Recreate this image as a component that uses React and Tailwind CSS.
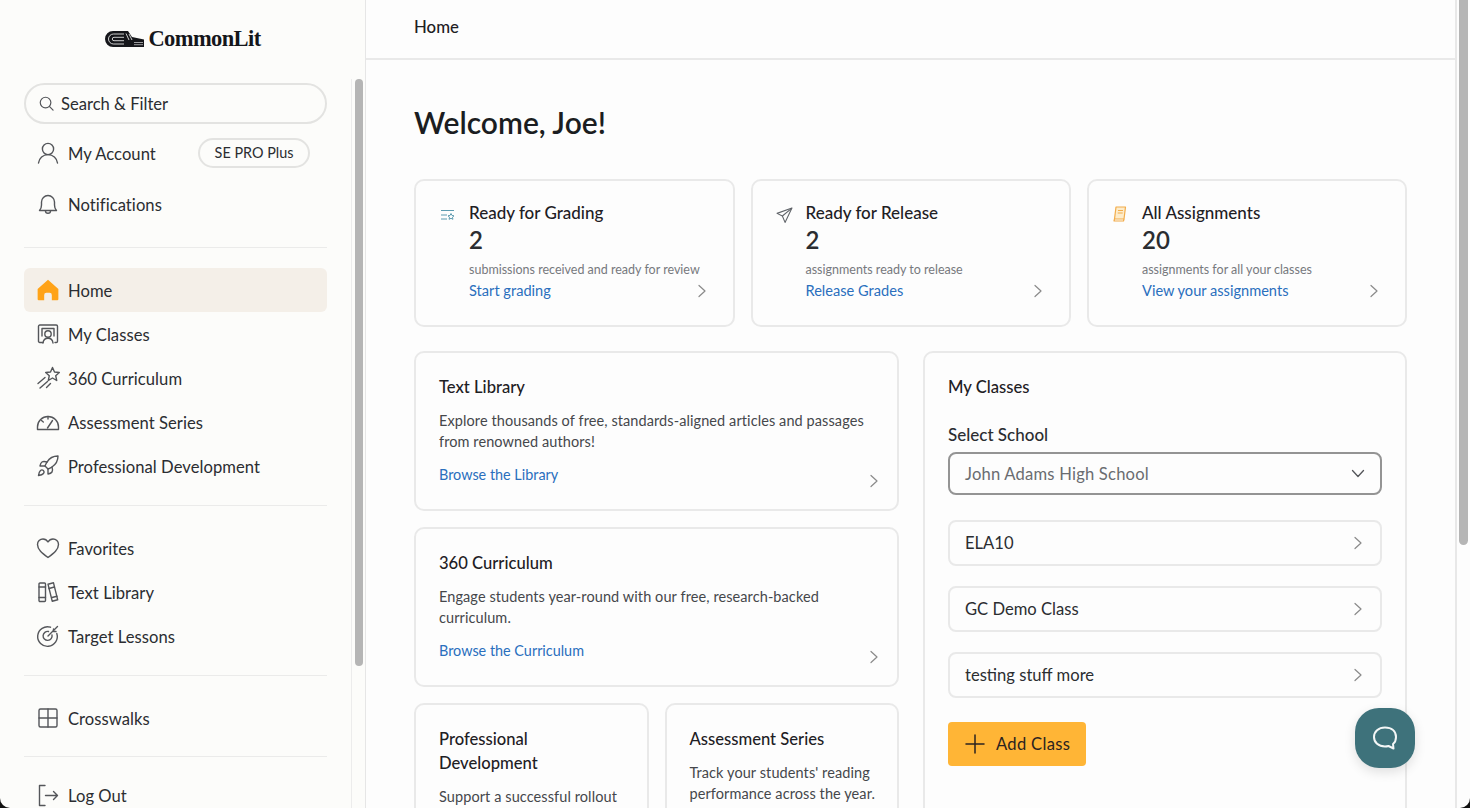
import React from "react";

const Ico = ({ children, size = 24, className = "", sw = 1.6 }) => (
  <svg width={size} height={size} viewBox="0 0 24 24" fill="none" stroke="currentColor" strokeWidth={sw} strokeLinecap="round" strokeLinejoin="round" className={`shrink-0 ${className}`}>
    {children}
  </svg>
);

const Chevron = ({ className = "" }) => (
  <svg width="10" height="14" viewBox="0 0 10 14" fill="none" stroke="#8a8a8a" strokeWidth="1.2" strokeLinecap="round" strokeLinejoin="round" className={`shrink-0 ${className}`}>
    <path d="M2 1.5 8 7l-6 5.5" />
  </svg>
);

const icons = {
  user: <><circle cx="12" cy="8" r="5.6" /><path d="M2.5 22c.6-5 4.5-8.4 9.5-8.4s8.900 3.400 9.500 8.400" /></>,
  bell: <><path d="M3.500 18.500c1.500-1.500 2-3 2-5.500V10a6.500 6.500 0 0 1 13 0v3c0 2.500.5 4 2 5.500z" /><path d="M9.500 19c0 3 5 3 5 0" /></>,
  classes: <><path d="M7 20.500H3.800a1.300 1.300 0 0 1-1.300-1.300V4.300A1.300 1.300 0 0 1 3.800 3h16.400a1.300 1.300 0 0 1 1.300 1.300v14.900a1.300 1.300 0 0 1-1.300 1.300H19" /><path d="M6 14V6.500h12V14" /><circle cx="12" cy="12" r="3.200" /><path d="M7 21c.4-3 2.500-4.800 5-4.800s4.600 1.800 5 4.800" /></>,
  star: <><path d="m16.500 1.500 2 4.500 4.800.5-3.600 3.200 1 4.800-4.200-2.500-4.200 2.500 1-4.800L9.700 6.500l4.800-.5z" /><path d="M9 11.500 2 17.500M11.500 15.500l-7.500 6.500M14.500 17.500 10.500 21.500" /></>,
  gauge: <><path d="M1.500 19.500V17a10.500 10.500 0 0 1 21 0v2.500z" /><path d="m11.500 18 5-7.500M12 6.500v2.500M5.500 10.500l1.800 1.500" /></>,
  rocket: <><path d="M4.500 16.500c-1.500 1.260-2 5-2 5s3.740-.5 5-2c.71-.84.700-2.130-.090-2.910a2.180 2.180 0 0 0-2.910-.090z" /><path d="m12 15-3-3a22 22 0 0 1 2-3.950A12.880 12.880 0 0 1 22 2c0 2.720-.78 7.500-6 11a22.350 22.350 0 0 1-4 2z" /><path d="M9 12H4s.55-3.030 2-4c1.620-1.080 5 0 5 0" /><path d="M12 15v5s3.030-.55 4-2c1.080-1.620 0-5 0-5" /></>,
  heart: <path d="M12 21.500C6 17 1.500 13.500 1.500 8.500A5.500 5.500 0 0 1 7 3c2.200 0 3.800 1 5 3 1.200-2 2.800-3 5-3a5.500 5.500 0 0 1 5.500 5.500c0 5-4.500 8.500-10.500 13z" />,
  books: <><rect x="3" y="3" width="6.500" height="18.500" rx="1" /><path d="M3 7h6.500M3 17.500h6.500" /><path d="m12 4.200 5.500-1.400 4.200 17-5.500 1.400z" /><path d="m13 8.500 5.400-1.500M16 17.500l5-1.300" /></>,
  target: <><path d="M20.800 9.500a9.800 9.800 0 1 1-6.300-6.300" /><path d="M16 11a4.500 4.500 0 1 1-3.500-3.500" /><path d="M12 12 21.500 2.500" /><path d="M17.500 5v2.500H20" /></>,
  grid: <><rect x="3" y="3" width="18" height="18" rx="1.500" /><path d="M12 3v18M3 12h18" /></>,
  logout: <><path d="M9 2.500H3.500v20H9" /><path d="M9.500 12.500h12M17.500 8.500l4 4-4 4" /></>,
};

const Row = ({ icon, label, active }) => (
  <div className={`flex h-[44.1px] items-center gap-[8px] rounded-md pl-[12px] ${active ? "bg-[#f4efe8]" : ""}`}>
    {icon === "home" ? (
      <svg width="24" height="24" viewBox="0 0 22 22" className="shrink-0">
        <path d="M11 1.500 20.500 10v9.500a1 1 0 0 1-1 1H14.500v-5a2 2 0 0 0-2-2h-3a2 2 0 0 0-2 2v5H2.500a1 1 0 0 1-1-1V10z" fill="#ffa318" />
      </svg>
    ) : (
      <Ico size={24} className="text-[#54565a]" sw={1.4}>{icons[icon]}</Ico>
    )}
    <span className="pt-[2px] text-[16.6px] leading-6 tracking-[0.05px] text-[#2b2d31]">{label}</span>
  </div>
);

const Divider = ({ className = "" }) => <div className={`h-px bg-[#ebebea] ${className}`} />;

const Logo = () => (
  <div className="flex h-[78px] items-center justify-center gap-[4px] pl-[15px]">
    <svg width="39" height="16" viewBox="0 0 39 16" className="shrink-0">
      <path d="M8 0h15l4 6 12 2.500V16H8A8 8 0 0 1 8 0z" fill="#15161a" />
      <path d="M19 3H8.500a5 5 0 0 0 0 10H19M19 6.300H9a1.700 1.700 0 0 0 0 3.400h10" fill="none" stroke="#fcfcfb" strokeWidth="0.8" />
      <path d="M21 2.500 24 9M24 3l3 6" fill="none" stroke="#fcfcfb" strokeWidth="0.8" />
      <path d="M29 11.500h9M29 13.700h9" fill="none" stroke="#fcfcfb" strokeWidth="0.6" />
    </svg>
    <span className="font-['Liberation_Serif',serif] text-[22.5px] font-bold leading-none tracking-[-0.6px] text-[#15161a]">CommonLit</span>
  </div>
);

const Sidebar = () => (
  <aside className="flex h-full w-[366px] shrink-0 border-r border-[#e6e6e6] bg-[#fcfcfa]">
    <div className="w-[351px] shrink-0 pl-[24px] pr-[24px]">
      <Logo />
      <div className="mt-[5px] flex h-[41px] items-center gap-[7px] rounded-full border-2 border-[#e3e3e1] pl-[13px]">
        <svg width="15" height="15" viewBox="0 0 24 24" fill="none" stroke="#54565a" strokeWidth="1.900" strokeLinecap="round" className="shrink-0"><circle cx="10.500" cy="10.500" r="8.500" /><path d="m17 17 5.500 5.500" /></svg>
        <span className="text-[16.6px] leading-6 text-[#2b2d31]">Search &amp; Filter</span>
      </div>
      <div className="mt-[7px] flex h-[44.3px] items-center gap-[8px] pl-[12px] pr-[17px]">
        <Ico size={24} className="text-[#54565a]" sw={1.4}>{icons.user}</Ico>
        <span className="pt-[2px] text-[16.6px] leading-6 tracking-[0.05px] text-[#2b2d31]">My Account</span>
        <span className="ml-auto flex h-[30px] w-[112px] items-center justify-center rounded-full border-2 border-[#e3e3e1] text-[14.4px] text-[#2b2d31]">SE PRO Plus</span>
      </div>
      <div className="mt-[7px]"><Row icon="bell" label="Notifications" /></div>
      <Divider className="mt-[20.5px]" />
      <div className="mt-[20px]">
        <Row icon="home" label="Home" active />
        <Row icon="classes" label="My Classes" />
        <Row icon="star" label="360 Curriculum" />
        <Row icon="gauge" label="Assessment Series" />
        <Row icon="rocket" label="Professional Development" />
      </div>
      <Divider className="mt-[16.6px]" />
      <div className="mt-[19.5px]">
        <Row icon="heart" label="Favorites" />
        <Row icon="books" label="Text Library" />
        <Row icon="target" label="Target Lessons" />
      </div>
      <Divider className="mt-[16.9px]" />
      <div className="mt-[19.9px]"><Row icon="grid" label="Crosswalks" /></div>
      <Divider className="mt-[16.6px]" />
      <div className="mt-[16px]"><Row icon="logout" label="Log Out" /></div>
    </div>
    <div className="w-[14px] shrink-0 pt-[79px]">
      <div className="flex h-full flex-col border-l border-[#ececec] pl-[3px]">
        <div className="h-[587px] w-[8px] rounded-full bg-[#b5b5b5]" />
      </div>
    </div>
  </aside>
);

const StatIcon = ({ kind }) => {
  if (kind === "grade")
    return (
      <svg width="15" height="12" viewBox="0 0 15 12" fill="none" stroke="#5d9bb0" strokeWidth="1" className="mt-[8px] shrink-0">
        <path d="M1 1.500h13M1 6h6M1 10h6" />
        <path d="m11 4.500 1 2 2 .3-1.500 1.400.4 2.100-1.900-1-1.900 1 .4-2.100L8 6.800l2-.3z" />
      </svg>
    );
  if (kind === "send")
    return (
      <svg width="17" height="17" viewBox="0 0 16 16" fill="none" stroke="#5f6368" strokeWidth="1" strokeLinejoin="round" className="ml-[-1px] mt-[6px] shrink-0">
        <path d="M15 1 1 6l5 2.500 2.500 6z" />
        <path d="M15 1 6 8.500" />
      </svg>
    );
  return (
    <svg width="14" height="16" viewBox="0 0 14 16" fill="none" stroke="#f2ac4a" strokeWidth="1.200" strokeLinejoin="round" className="mt-[5px] shrink-0">
      <path d="M3 1h9.500l-1.500 12H1.500z" fill="#fdeccb" />
      <path d="M1.500 13 1 15h9.500l.5-2" />
      <path d="M5 4.500h5M4.700 7h5" />
    </svg>
  );
};

const StatCard = ({ kind, title, n, desc, link }) => (
  <div className="flex h-[148px] rounded-[10px] border-2 border-[#e9e9e9] pl-[24px] pr-[26px] pt-[20px]">
    <div className="w-[29px] shrink-0"><StatIcon kind={kind} /></div>
    <div className="min-w-0 flex-1">
      <div className="text-[17px] font-medium leading-6 text-[#1e2024]">{title}</div>
      <div className="-mt-[1px] text-[24px] font-semibold leading-8 text-[#2b2d31]">{n}</div>
      <div className="mt-[4px] text-[12.5px] leading-5 text-[#77797d]">{desc}</div>
      <div className="flex items-center justify-between">
        <span className="text-[14.6px] leading-[22px] text-[#2a6fbd]">{link}</span>
        <Chevron />
      </div>
    </div>
  </div>
);

const Feature = ({ title, desc, link, h, className = "" }) => (
  <div className={`relative rounded-[10px] border-2 border-[#e9e9e9] pl-[23px] pt-[22px] ${h} ${className}`}>
    <div className="text-[16.6px] font-medium leading-6 text-[#1e2024]">{title}</div>
    <p className="mt-[11px] text-[14.5px] leading-[21px] tracking-[0.09px] text-[#45474b]">{desc}</p>
    {link && <div className="mt-[12px] text-[14.4px] leading-[22px] text-[#2a6fbd]">{link}</div>}
    {link && <Chevron className="absolute right-[18px] top-[121px]" />}
  </div>
);

const ClassRow = ({ name }) => (
  <div className="flex h-[46px] items-center justify-between rounded-lg border-2 border-[#e9e9e9] pl-[15px] pr-[17px]">
    <span className="text-[16.6px] text-[#2b2d31]">{name}</span>
    <Chevron />
  </div>
);

const Main = () => (
  <main className="relative flex h-full min-w-0 flex-1 bg-[#fdfdfd]">
    <div className="h-full min-w-0 flex-1 overflow-hidden">
      <header className="flex h-[60px] items-center border-b-2 border-[#e9e9e9] pb-[4px] pl-[48px]">
        <span className="text-[16.8px] font-medium text-[#1e2024]">Home</span>
      </header>
      <div className="px-[48px]">
        <h1 className="mt-[43px] text-[30px] font-semibold leading-[38px] text-[#1b1d21]">Welcome, Joe!</h1>
        <div className="mt-[38px] grid grid-cols-[320.5px_320.5px_320px] gap-4">
          <StatCard kind="grade" title="Ready for Grading" n="2" desc="submissions received and ready for review" link="Start grading" />
          <StatCard kind="send" title="Ready for Release" n="2" desc="assignments ready to release" link="Release Grades" />
          <StatCard kind="all" title="All Assignments" n="20" desc="assignments for all your classes" link="View your assignments" />
        </div>
        <div className="mt-[24px] grid grid-cols-[485px_484px] gap-6">
          <div className="flex flex-col gap-4">
            <Feature h="h-[160px]" className="pr-[23px]" title="Text Library" desc="Explore thousands of free, standards-aligned articles and passages from renowned authors!" link="Browse the Library" />
            <Feature h="h-[160px]" className="pr-[23px]" title="360 Curriculum" desc="Engage students year-round with our free, research-backed curriculum." link="Browse the Curriculum" />
            <div className="grid grid-cols-[234.5px_234.5px] gap-4">
              <Feature h="h-[200px]" className="pr-[23px]" title="Professional Development" desc="Support a successful rollout" />
              <Feature h="h-[200px]" className="pr-[15px]" title="Assessment Series" desc="Track your students' reading performance across the year." />
            </div>
          </div>
          <div className="h-[500px] rounded-[10px] border-2 border-[#e9e9e9] pl-[23px] pr-[23px] pt-[22px]">
            <div className="text-[16.6px] font-medium leading-6 text-[#1e2024]">My Classes</div>
            <div className="mt-[24px] text-[17px] font-medium leading-6 text-[#2b2d31]">Select School</div>
            <div className="mt-[5px] flex h-[43px] items-center justify-between rounded-lg border-2 border-[#949494] pl-[15px] pr-[15px]">
              <span className="pt-[2px] text-[16.6px] tracking-[0.2px] text-[#6a6c70]">John Adams High School</span>
              <svg width="14" height="9" viewBox="0 0 14 9" fill="none" stroke="#54565a" strokeWidth="1.300" strokeLinecap="round" strokeLinejoin="round"><path d="m1.500 1.500 5.500 6 5.500-6" /></svg>
            </div>
            <div className="mt-[25px] flex flex-col gap-5">
              <ClassRow name="ELA10" />
              <ClassRow name="GC Demo Class" />
              <ClassRow name="testing stuff more" />
            </div>
            <div className="mt-[24px] flex h-[44px] w-[138px] items-center gap-[11px] rounded-[4px] bg-[#ffb536] pl-[17px]">
              <svg width="20" height="20" viewBox="0 0 20 20" fill="none" stroke="#2b2320" strokeWidth="1.500" strokeLinecap="round"><path d="M10 1v18M1 10h18" /></svg>
              <span className="text-[16.6px] tracking-[0.3px] text-[#2b2320]">Add Class</span>
            </div>
          </div>
        </div>
      </div>
    </div>
    <div className="h-full w-[15px] shrink-0 border-l-2 border-[#e8e8e8] pl-[2px]">
      <div className="h-[545px] w-[9px] rounded-b-full bg-[#b5b5b5]" />
    </div>
    <div className="absolute left-[989px] top-[708px] flex h-[60px] w-[60px] items-center justify-center rounded-[24px] bg-[#3e727b] shadow-[0_4px_12px_rgba(0,0,0,0.12)]">
      <svg width="26" height="26" viewBox="0 0 26 26" fill="none" stroke="#f4f7f7" strokeWidth="2" strokeLinejoin="round">
        <path d="M13 2.500c6.500 0 11 3.500 11 9.500 0 3-1 5.500-3 7l.5 4.500-5-2.500c-1 .3-2.300.5-3.500.5-6.500 0-11-4-11-9.500S6.500 2.500 13 2.500z" />
      </svg>
    </div>
  </main>
);

export default function App() {
  return (
    <div className="h-[808px] w-full overflow-hidden bg-[#111111] font-['Lato',sans-serif]">
      <div className="flex h-full overflow-hidden rounded-b-[10px]">
        <Sidebar />
        <Main />
      </div>
    </div>
  );
}
